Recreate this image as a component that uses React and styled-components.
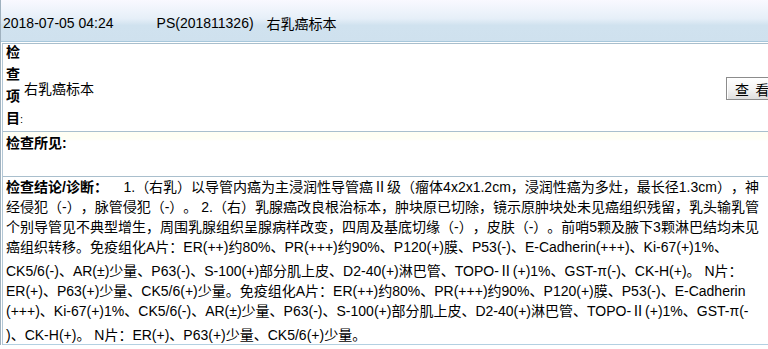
import React from "react";
import styled, { createGlobalStyle } from "styled-components";

const GlobalStyle = createGlobalStyle`
  html, body { margin: 0; padding: 0; background: #ffffff; overflow: hidden; }
  body {
    font-family: "Liberation Sans", "Noto Sans CJK SC", sans-serif;
    color: #000;
    text-spacing-trim: space-all;
  }
`;

const Page = styled.div`
  width: 800px;
  border-left: 1px solid #9fb1bf;
`;

const Header = styled.div`
  height: 42px;
  box-sizing: border-box;
  padding: 4px 0 0 2px;
  display: flex;
  align-items: center;
  font-size: 14px;
  background: linear-gradient(to bottom, #f9f9ff 0%, #e6eff8 45%, #d0e2ef 62%, #cfe1ee 100%);
  border-bottom: 1px solid #a7c7db;
`;

const HeaderItem = styled.span`
  margin-left: ${(p) => p.$gap || 0}px;
  white-space: nowrap;
`;

const Table = styled.div`
  margin-top: 1px;
  border-top: 1px solid #a9bfcd;
  margin-left: 1px;
  border-left: 1px solid #b3c7d5;
`;

const Row = styled.div`
  display: flex;
  align-items: ${(p) => p.$align || "flex-start"};
  height: ${(p) => p.$h}px;
  border-bottom: 1px solid ${(p) => p.$line || "#a9bfcd"};
  box-sizing: border-box;
  background: ${(p) =>
    p.$tint
      ? "linear-gradient(to bottom, #fffff3 0px, #fffff6 7px, #ffffff 9px)"
      : "#fff"};
`;

const VerticalLabel = styled.div`
  align-self: flex-start;
  width: 14px;
  margin-left: 3px;
  margin-top: -3px;
  font-size: 14px;
  font-weight: bold;
  line-height: 22px;
  word-break: break-all;
`;

const Colon = styled.span`
  font-weight: normal;
  font-size: 11px;
`;

const Value = styled.div`
  flex: 1;
  font-size: 14px;
  padding-left: 4px;
`;

const ViewButton = styled.button`
  width: 62px;
  height: 23px;
  margin-right: 13px;
  margin-top: 2px;
  padding: 0 0 0 8px;
  text-align: left;
  font-family: "Noto Sans CJK SC", sans-serif;
  font-size: 14px;
  color: #000;
  border: 1px solid #8c8c8c;
  background: linear-gradient(to bottom, #ffffff 0%, #f3f3f3 55%, #dedede 100%);
  box-shadow: inset 1px 1px 0 #ffffff;
  white-space: pre;
  line-height: 20px;
`;

const FindingsLabel = styled.div`
  font-size: 14px;
  font-weight: bold;
  line-height: 20px;
  padding: 1px 0 0 3px;
`;

const Conclusion = styled.div`
  padding: 0 0 0 3px;
  font-size: 14px;
`;

const Line = styled.div`
  white-space: nowrap;
  line-height: 20px;
  margin-top: ${(p) => p.$extra || 0}px;
`;

const Bold = styled.b`
  font-weight: bold;
`;

const lines = [
  { text: " \u00a0\u00a0 1.（右乳）以导管内癌为主浸润性导管癌Ⅱ级（瘤体4x2x1.2cm，浸润性癌为多灶，最长径1.3cm），神", lead: true },
  { text: "经侵犯（-），脉管侵犯（-）。 2.（右）乳腺癌改良根治标本，肿块原已切除，镜示原肿块处未见癌组织残留，乳头输乳管" },
  { text: "个别导管见不典型增生，周围乳腺组织呈腺病样改变，四周及基底切缘（-），皮肤（-）。前哨5颗及腋下3颗淋巴结均未见" },
  { text: "癌组织转移。免疫组化A片：ER(++)约80%、PR(+++)约90%、P120(+)膜、P53(-)、E-Cadherin(+++)、Ki-67(+)1%、" },
  { text: "CK5/6(-)、AR(±)少量、P63(-)、S-100(+)部分肌上皮、D2-40(+)淋巴管、TOPO-Ⅱ(+)1%、GST-π(-)、CK-H(+)。 N片：", extra: 4 },
  { text: "ER(+)、P63(+)少量、CK5/6(+)少量。免疫组化A片：ER(++)约80%、PR(+++)约90%、P120(+)膜、P53(-)、E-Cadherin" },
  { text: "(+++)、Ki-67(+)1%、CK5/6(-)、AR(±)少量、P63(-)、S-100(+)部分肌上皮、D2-40(+)淋巴管、TOPO-Ⅱ(+)1%、GST-π(-" },
  { text: ")、CK-H(+)。 N片：ER(+)、P63(+)少量、CK5/6(+)少量。", extra: 4 },
];

export default function App() {
  return (
    <>
      <GlobalStyle />
      <Page>
        <Header>
          <HeaderItem>2018-07-05 04:24</HeaderItem>
          <HeaderItem $gap={43}>PS(201811326)</HeaderItem>
          <HeaderItem $gap={13}>右乳癌标本</HeaderItem>
        </Header>
        <Table>
          <Row $h={88} $align="center">
            <VerticalLabel>
              检查项目<Colon>:</Colon>
            </VerticalLabel>
            <Value>右乳癌标本</Value>
            <ViewButton>{"查\u00a0\u00a0看"}</ViewButton>
          </Row>
          <Row $h={45} $tint>
            <FindingsLabel>检查所见:</FindingsLabel>
          </Row>
          <Row $h={168} $line="#b3d0e2">
            <Conclusion>
              {lines.map((l, i) => (
                <Line key={i} $extra={l.extra}>
                  {l.lead && <Bold>检查结论/诊断：</Bold>}
                  {l.text}
                </Line>
              ))}
            </Conclusion>
          </Row>
        </Table>
      </Page>
    </>
  );
}
